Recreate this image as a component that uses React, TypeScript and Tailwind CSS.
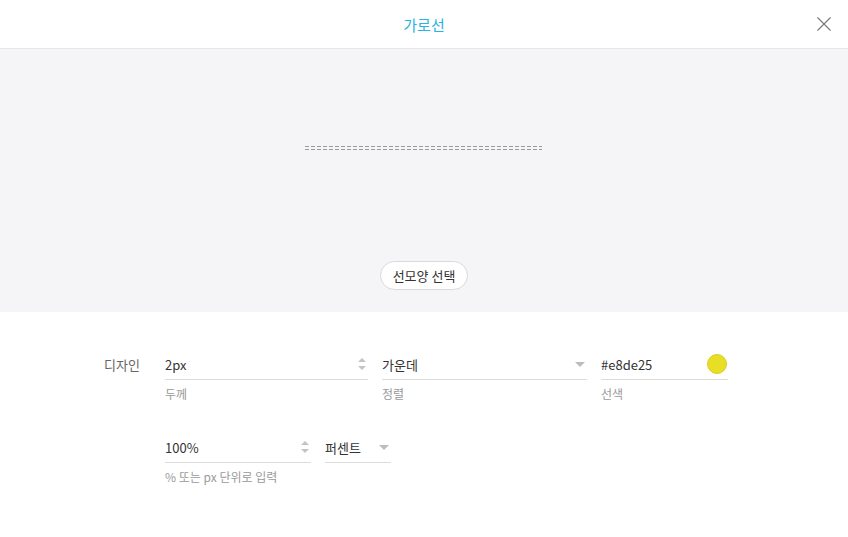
import React from "react";

const font = { fontFamily: '"Noto Sans CJK KR", "Noto Sans", sans-serif' };

function Spinner() {
  return (
    <svg width="10" height="16" viewBox="0 0 10 16" className="shrink-0">
      <path d="M1 6 L5 2 L9 6 Z" fill="#c4c4c4" />
      <path d="M1 10 L5 14 L9 10 Z" fill="#c4c4c4" />
    </svg>
  );
}

function Caret() {
  return (
    <svg width="10" height="6" viewBox="0 0 10 6" className="shrink-0 mt-[6px]">
      <path d="M0 0 L10 0 L5 5 Z" fill="#bdbdbd" />
    </svg>
  );
}

function Field({ w, value, label, right }: { w: string; value: string; label?: string; right: React.ReactNode }) {
  return (
    <div className={`${w} flex flex-col`}>
      <div className="h-[31px] flex items-center justify-between border-b border-[#dcdcdc] pr-[1px]">
        <span className="text-[13px] text-[#333] leading-none">{value}</span>
        {right}
      </div>
      {label ? <div className="mt-[5px] text-[12px] leading-[18px] text-[#9a9a9a]">{label}</div> : null}
    </div>
  );
}

export default function App() {
  return (
    <div className="w-[848px] h-[537px] bg-white overflow-hidden" style={font}>
      <div className="h-[49px] relative flex items-center justify-center border-b border-[#e6e6e6]">
        <span className="text-[15px] text-[#27b3e4] leading-none">가로선</span>
        <svg className="absolute right-[17px] top-[17px]" width="14" height="14" viewBox="0 0 14 14">
          <path d="M0.5 0.5 L13.5 13.5 M13.5 0.5 L0.5 13.5" stroke="#777" strokeWidth="1.1" fill="none" />
        </svg>
      </div>
      <div className="h-[263px] bg-[#f5f5f7] flex flex-col items-center">
        <svg className="mt-[97px] ml-[-2px]" width="237" height="5" viewBox="0 0 237 5">
          <line x1="0" y1="0.5" x2="237" y2="0.5" stroke="#9a9a9a" strokeWidth="1" strokeDasharray="4 2" />
          <line x1="0" y1="3.5" x2="237" y2="3.5" stroke="#9a9a9a" strokeWidth="1" strokeDasharray="4 2" />
        </svg>
        <button className="mt-[110px] h-[29px] px-[12px] rounded-full bg-white border border-[#d9d9d9] text-[13px] text-[#333] leading-none">
          선모양 선택
        </button>
      </div>
      <div className="pl-[104px] pt-[37px]">
        <div className="flex">
          <div className="w-[61px] h-[31px] flex items-center text-[13px] text-[#666]">디자인</div>
          <div className="flex flex-col">
            <div className="flex gap-[14px]">
              <Field w="w-[203px]" value="2px" label="두께" right={<Spinner />} />
              <Field w="w-[205px]" value="가운데" label="정렬" right={<div className="pr-[1px] mb-[5px]"><Caret /></div>} />
              <Field
                w="w-[127px]"
                value="#e8de25"
                label="선색"
                right={<div className="w-[20px] h-[20px] rounded-full bg-[#e8de25] border border-[#d9cf1c]" />}
              />
            </div>
            <div className="flex gap-[14px] mt-[29px]">
              <Field w="w-[146px]" value="100%" label="% 또는 px 단위로 입력" right={<Spinner />} />
              <Field w="w-[66px]" value="퍼센트" right={<div className="pr-[1px] mb-[5px]"><Caret /></div>} />
            </div>
          </div>
        </div>
      </div>
    </div>
  );
}
